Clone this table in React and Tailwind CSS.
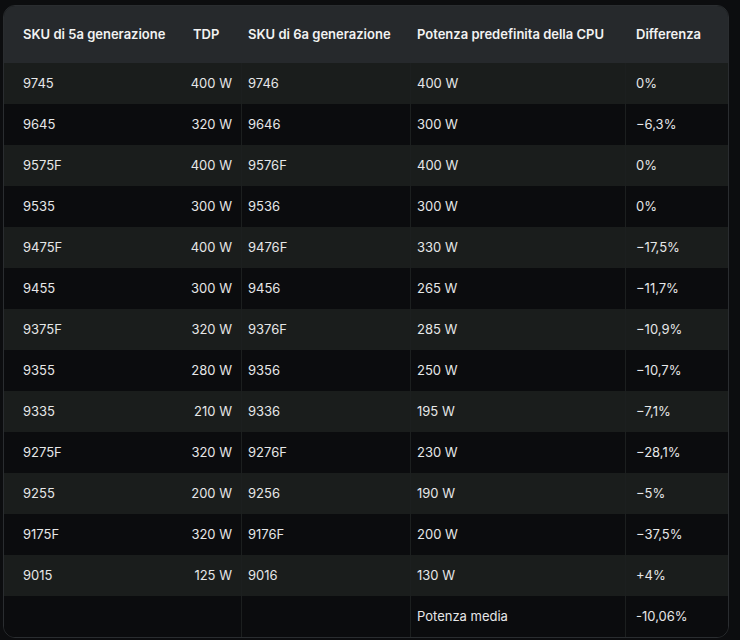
import React from "react";

const rows = [
  ["9745", "400 W", "9746", "400 W", "0%"],
  ["9645", "320 W", "9646", "300 W", "\u22126,3%"],
  ["9575F", "400 W", "9576F", "400 W", "0%"],
  ["9535", "300 W", "9536", "300 W", "0%"],
  ["9475F", "400 W", "9476F", "330 W", "\u221217,5%"],
  ["9455", "300 W", "9456", "265 W", "\u221211,7%"],
  ["9375F", "320 W", "9376F", "285 W", "\u221210,9%"],
  ["9355", "280 W", "9356", "250 W", "\u221210,7%"],
  ["9335", "210 W", "9336", "195 W", "\u22127,1%"],
  ["9275F", "320 W", "9276F", "230 W", "\u221228,1%"],
  ["9255", "200 W", "9256", "190 W", "\u22125%"],
  ["9175F", "320 W", "9176F", "200 W", "\u221237,5%"],
  ["9015", "125 W", "9016", "130 W", "+4%"],
  ["", "", "", "Potenza media", "-10,06%"],
];

export default function App() {
  return (
    <div
      className="min-h-[640px] w-[740px] bg-[#0c0d0f] pt-[5px] pl-[3px]"
      style={{ fontFamily: "Inter, 'Noto Sans', sans-serif" }}
    >
      <div className="w-[726px] overflow-hidden rounded-xl border border-[#2a2d30] text-[13px] text-[#e6e7e8]">
        <div className="grid h-[57px] grid-cols-[179px_58px_169px_215px_103px] items-center bg-[#26292c] font-semibold text-[#f2f2f2]">
          <div className="pl-[19px]">SKU di 5a generazione</div>
          <div className="pl-[10px]">TDP</div>
          <div className="pl-[7px]">SKU di 6a generazione</div>
          <div className="pl-[7px]">Potenza predefinita della CPU</div>
          <div className="pl-[11px]">Differenza</div>
        </div>
        {rows.map((r, i) => (
          <div
            key={i}
            className={
              "grid h-[41px] grid-cols-[179px_58px_169px_215px_103px] items-center " +
              (i % 2 === 0 ? "bg-[#1a1d1c]" : "bg-[#0b0c0e]")
            }
          >
            <div className="pl-[19px]">{r[0]}</div>
            <div className="pr-[9px] text-right">{r[1]}</div>
            <div className="flex h-full items-center border-l border-[#1c1f1f] pl-[6px]">{r[2]}</div>
            <div className="flex h-full items-center border-l border-[#1c1f1f] pl-[6px]">{r[3]}</div>
            <div className="flex h-full items-center border-l border-[#1c1f1f] pl-[10px]">{r[4]}</div>
          </div>
        ))}
      </div>
    </div>
  );
}
